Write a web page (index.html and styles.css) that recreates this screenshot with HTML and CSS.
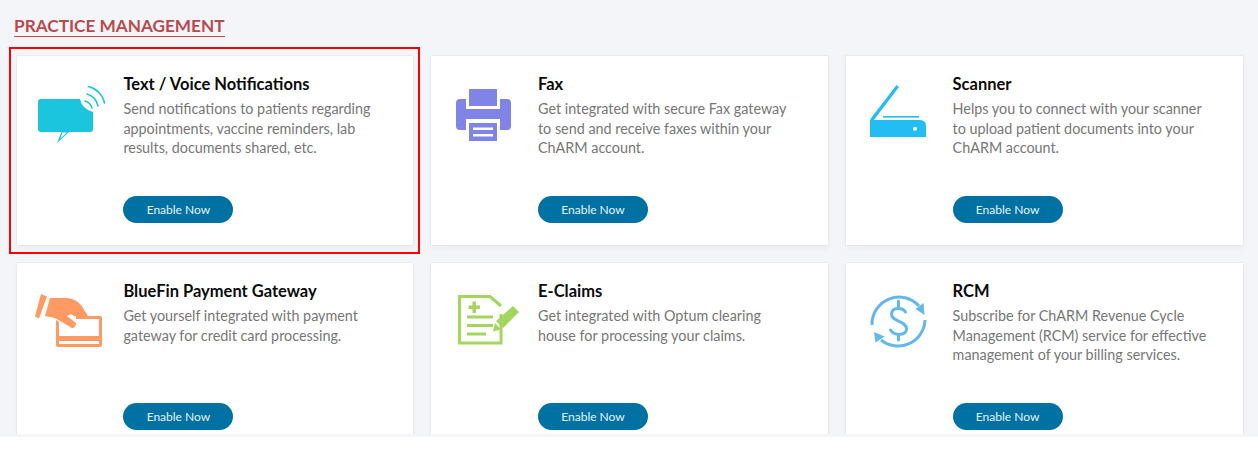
FILE: index.html
```html
<!DOCTYPE html>
<html lang="en">
<head>
<meta charset="utf-8">
<title>Practice Management</title>
<link rel="stylesheet" href="styles.css">
</head>
<body>
<div class="page">
  <div class="clip">
    <h1 class="heading">PRACTICE MANAGEMENT</h1>
    <div class="grid">
      <section class="card card-selected">
        <svg class="icon" viewBox="33 82 80 70" aria-hidden="true">
          <path d="M41 99H80Q82 109 93 112V129Q93 132 90 132H69L57 143L61.500 132H41Q38 132 38 129V102Q38 99 41 99Z" fill="#1cc5de"/>
          <path d="M62.500 132.500L60.500 138.500L67 132.500Z" fill="#fff"/>
          <g fill="none" stroke="#1cc5de" stroke-width="1.600" stroke-linecap="round">
            <path d="M85 101C88.500 102 91 104.500 92 108"/>
            <path d="M87 94C92.500 95.500 96.500 100 98 106"/>
            <path d="M88.500 86.500C96.500 88.500 103 95 104.500 103"/>
          </g>
        </svg>
        <div class="body">
          <h2 class="title">Text / Voice Notifications</h2>
          <p class="desc">Send notifications to patients regarding appointments, vaccine reminders, lab results, documents shared, etc.</p>
          <button class="btn">Enable Now</button>
        </div>
      </section>
      <section class="card">
        <svg class="icon" viewBox="447 82 80 70" aria-hidden="true">
          <g fill="#7f84e6">
            <rect x="469" y="89" width="28" height="17"/>
            <path d="M460 99H466V109H500V99H507Q511 99 511 103V126Q511 130 507 130H500V119H466V130H460Q456 130 456 126V103Q456 99 460 99Z"/>
            <path d="M469 123H497V141H469ZM473 127.500V130H493V127.500ZM473 134V136.500H493V134Z" fill-rule="evenodd"/>
          </g>
        </svg>
        <div class="body">
          <h2 class="title">Fax</h2>
          <p class="desc">Get integrated with secure Fax gateway to send and receive faxes within your ChARM account.</p>
          <button class="btn">Enable Now</button>
        </div>
      </section>
      <section class="card">
        <svg class="icon" viewBox="862 82 80 70" aria-hidden="true">
          <g fill="#22bdf2">
            <path d="M870 120H920Q926 120 926 126V137H870Z"/>
            <path d="M870 119.500L896.500 85L899 87L873.500 120.500Z"/>
            <rect x="883" y="116" width="36" height="1.600"/>
          </g>
          <circle cx="915" cy="128.700" r="2" fill="#fff"/>
        </svg>
        <div class="body">
          <h2 class="title">Scanner</h2>
          <p class="desc">Helps you to connect with your scanner to upload patient documents into your ChARM account.</p>
          <button class="btn">Enable Now</button>
        </div>
      </section>
      <section class="card">
        <svg class="icon" viewBox="33 289 80 70" aria-hidden="true">
          <g fill="#ff9a62">
            <path d="M41 294L47 296.500L39 318.500L35 316.500Z"/>
            <path d="M50 298H67Q76 299 81 305L88 316H74L71 314L67 316L76 323Q76 328 72 328L55 318L45 316Z"/>
            <path d="M76 316H100Q102 316 102 318V345Q102 347 100 347H58Q56 347 56 345V320L59 322V336H99V319H76ZM59 341V344H99V341Z" fill-rule="evenodd"/>
          </g>
        </svg>
        <div class="body">
          <h2 class="title">BlueFin Payment Gateway</h2>
          <p class="desc">Get yourself integrated with payment gateway for credit card processing.</p>
          <button class="btn">Enable Now</button>
        </div>
      </section>
      <section class="card">
        <svg class="icon" viewBox="447 289 80 70" aria-hidden="true">
          <path d="M501 314V343H459.500V296.500H490L501 306" fill="none" stroke="#a4d65e" stroke-width="3"/>
          <g fill="#a4d65e">
            <path d="M472.500 301.500H476V305.500H480V309H476V313H472.500V309H468.500V305.500H472.500Z"/>
            <rect x="467" y="315.500" width="26" height="3"/>
            <rect x="467" y="324" width="26" height="3"/>
            <rect x="467" y="332.500" width="19" height="3"/>
            <path d="M513 306L519 312L503 328L496 321ZM495 323L501 329.500L493 331.500Z"/>
          </g>
        </svg>
        <div class="body">
          <h2 class="title">E-Claims</h2>
          <p class="desc">Get integrated with Optum clearing house for processing your claims.</p>
          <button class="btn">Enable Now</button>
        </div>
      </section>
      <section class="card">
        <svg class="icon" viewBox="862 289 80 70" aria-hidden="true">
          <g fill="none" stroke="#62b8ee" stroke-width="3">
            <path d="M872 325A27 27 0 0 1 919 306"/>
            <path d="M925 320A27 27 0 0 1 881 340"/>
            <path d="M905.500 312C903 307.500 892 306.500 891.500 314C891 322 906.500 320 906.500 329C906.500 336 894 336 890.500 330" stroke-linecap="round"/>
            <path d="M898.500 301V307M898.500 335V340" stroke-linecap="round"/>
          </g>
          <g fill="#62b8ee">
            <path d="M915.500 309L923.500 303L924.500 315Z"/>
            <path d="M874 332L884.500 336.500L875.500 342.500Z"/>
          </g>
        </svg>
        <div class="body">
          <h2 class="title">RCM</h2>
          <p class="desc">Subscribe for ChARM Revenue Cycle Management (RCM) service for effective management of your billing services.</p>
          <button class="btn">Enable Now</button>
        </div>
      </section>
    </div>
  </div>
</div>
</body>
</html>
```
FILE: styles.css
```css
* { box-sizing: border-box; }
html, body { margin: 0; background: #fff; }
body { font-family: Lato, "Liberation Sans", sans-serif; }
.page { background: #f4f5f9; padding-bottom: 3px; }
.clip { height: 434px; overflow: hidden; padding: 15px 15.4px 0 16.8px; }
.heading {
  display: table;
  margin: 0 0 19px -2.8px;
  font-size: 17.2px;
  line-height: 21px;
  font-weight: 700;
  color: #b84a4c;
  border-bottom: 1px solid #c9474a;
}
.grid {
  display: grid;
  grid-template-columns: repeat(3, 1fr);
  grid-auto-rows: 189px;
  gap: 18px;
}
.card {
  position: relative;
  display: flex;
  background: #fff;
  box-shadow: 0 0 1px rgba(60, 70, 100, .25), 0 3px 6px rgba(60, 70, 100, .05);
}
.card-selected::after {
  content: "";
  position: absolute;
  inset: -9px -6.6px -9px -7.8px;
  border: 2px solid #f00;
  pointer-events: none;
}
.icon { flex: none; width: 80px; height: 70px; margin: 26px 0 0 16px; }
.body { flex: 1; display: flex; flex-direction: column; align-items: flex-start; padding: 18px 12px 0 10.6px; }
.title { margin: 0 0 5px; font-size: 16.5px; line-height: 20px; font-weight: 700; color: #0b0b0b; }
.desc { margin: 0; width: 258px; height: 97px; font-size: 14.35px; line-height: 19.6px; color: #777; }
.btn {
  width: 110px;
  height: 27px;
  padding: 0;
  border: 0;
  border-radius: 14px;
  background: #0071a3;
  color: #e6f3f8;
  font: 400 12px Lato, "Liberation Sans", sans-serif;
}
```
